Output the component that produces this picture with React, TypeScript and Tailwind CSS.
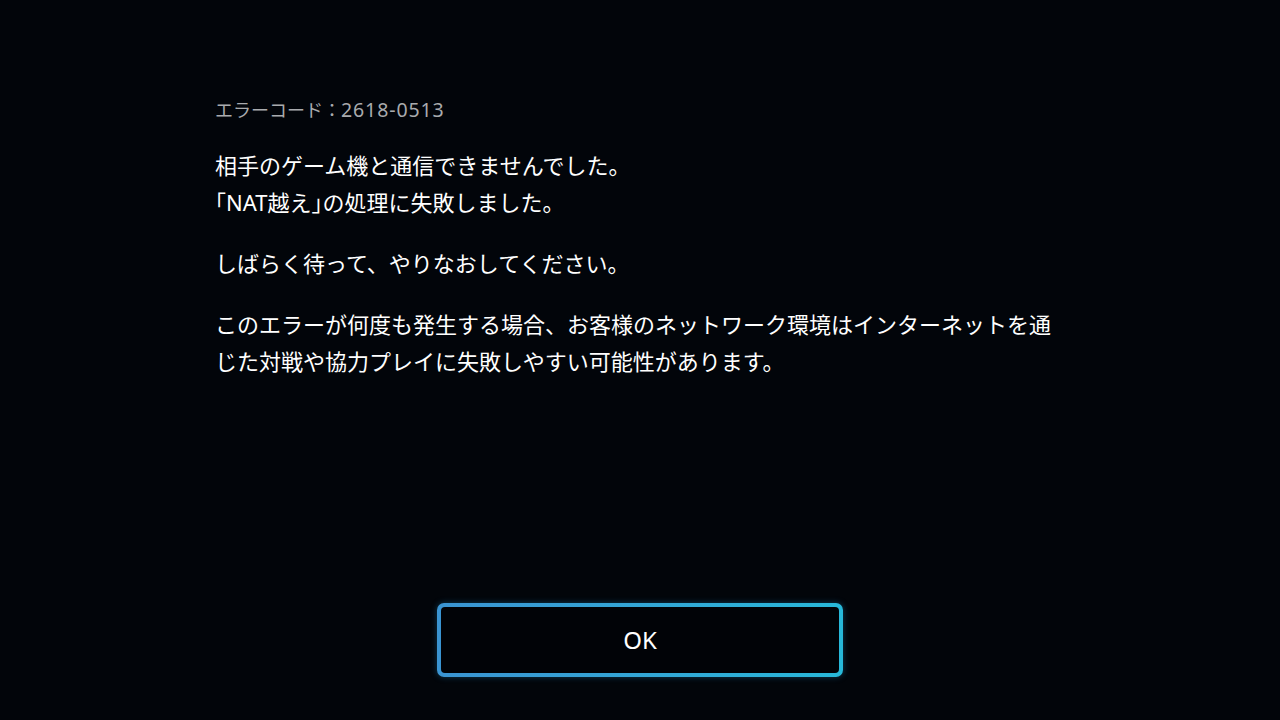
export default function App() {
  return (
    <div
      className="w-[1280px] h-[720px] bg-[#02050a] text-white flex flex-col overflow-hidden"
      style={{ fontFamily: '"Noto Sans", "Noto Sans CJK JP", sans-serif' }}
    >
      <div className="flex-1 pl-[215px] pt-[97px]">
        <div className="w-[840px]">
          <p className="text-[18px] leading-[26px] text-[#a9abae]">
            エラーコード：<span className="text-[19.5px] tracking-[0.9px]">2618-0513</span>
          </p>
          <p className="mt-[24px] text-[22px] leading-[37px]">
            相手のゲーム機と通信できませんでした。
            <br />
            ｢NAT越え｣の処理に失敗しました。
          </p>
          <p className="mt-[24px] text-[22px] leading-[37px]">しばらく待って、やりなおしてください。</p>
          <p className="mt-[24px] text-[22px] leading-[37px]">
            このエラーが何度も発生する場合、お客様のネットワーク環境はインターネットを通じた対戦や協力プレイに失敗しやすい可能性があります。
          </p>
        </div>
      </div>
      <div className="flex justify-center pb-[43px]">
        <button className="w-[406px] h-[74px] rounded-[7px] p-[4px] bg-gradient-to-r from-[#3a94d2] to-[#27b8d9] shadow-[0_0_6px_rgba(40,160,220,0.35)]">
          <div className="w-full h-full rounded-[4px] bg-[#010307] flex items-center justify-center text-[24px] text-white">
            OK
          </div>
        </button>
      </div>
    </div>
  )
}
